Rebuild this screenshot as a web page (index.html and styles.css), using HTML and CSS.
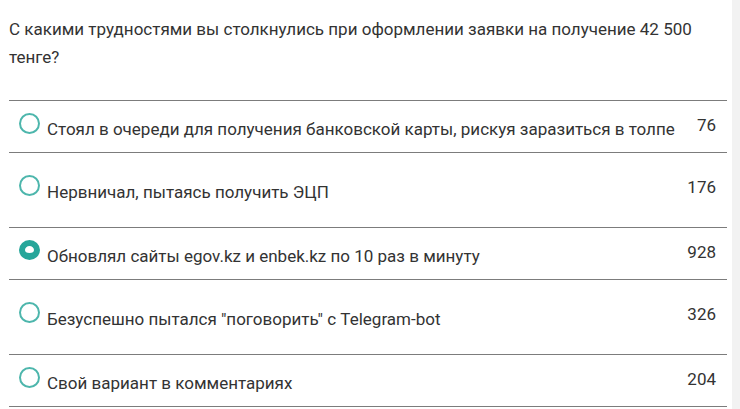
FILE: index.html
```html
<!DOCTYPE html>
<html lang="ru">
<head>
    <meta charset="UTF-8">
    <meta name="viewport" content="width=device-width, initial-scale=1.0">
    <title>Опрос</title>
    <link rel="stylesheet" href="styles.css">
</head>
<body>
    <div class="poll">
        <p class="question">С какими трудностями вы столкнулись при оформлении заявки на получение 42 500 тенге?</p>
        <ul class="answers">
            <li class="answer">
                <span class="radio"></span>
                <span class="label">Стоял в очереди для получения банковской карты, рискуя заразиться в толпе</span>
                <span class="count">76</span>
            </li>
            <li class="answer tall">
                <span class="radio"></span>
                <span class="label">Нервничал, пытаясь получить ЭЦП</span>
                <span class="count">176</span>
            </li>
            <li class="answer">
                <span class="radio checked"></span>
                <span class="label">Обновлял сайты egov.kz и enbek.kz по 10 раз в минуту</span>
                <span class="count">928</span>
            </li>
            <li class="answer tall">
                <span class="radio"></span>
                <span class="label">Безуспешно пытался "поговорить" с Telegram-bot</span>
                <span class="count">326</span>
            </li>
            <li class="answer">
                <span class="radio"></span>
                <span class="label">Свой вариант в комментариях</span>
                <span class="count">204</span>
            </li>
        </ul>
    </div>
    <div class="scroll-strip"></div>
</body>
</html>
```

FILE: styles.css
```css
body {
    margin: 0;
    font-family: Roboto, Arial, sans-serif;
    color: #333;
    background-color: #fff;
    display: flex;
    min-height: 409px;
}

.poll {
    width: 718px;
    padding: 0 5px 0 9px;
}

.question {
    margin: 15px 0 0;
    font-size: 17px;
    line-height: 28px;
    height: 85px;
}

.answers {
    list-style-type: none;
    margin: 0;
    padding: 0;
    border-bottom: 1px solid #7c7c7c;
}

.answer {
    display: flex;
    align-items: flex-start;
    border-top: 1px solid #7c7c7c;
    padding: 12px 0 12px 10px;
    height: 27px;
    font-size: 17px;
}

.answer.tall {
    padding-top: 22px;
    padding-bottom: 25px;
}

.answer.tall .label {
    margin-top: 7px;
}

.radio {
    flex: none;
    width: 17px;
    height: 17px;
    border: 2px solid #4db6ac;
    border-radius: 50%;
    margin-right: 7px;
}

.radio.checked {
    width: 9px;
    height: 7px;
    border: 6px solid #26a69a;
    border-width: 6px 6px 7px;
}

.label {
    flex: 1;
    margin-top: 6px;
    line-height: 20px;
}

.count {
    margin-top: 2px;
    line-height: 20px;
    padding-right: 11px;
    text-align: right;
}

.scroll-strip {
    width: 8px;
    background-color: #f2f2f2;
}
```
